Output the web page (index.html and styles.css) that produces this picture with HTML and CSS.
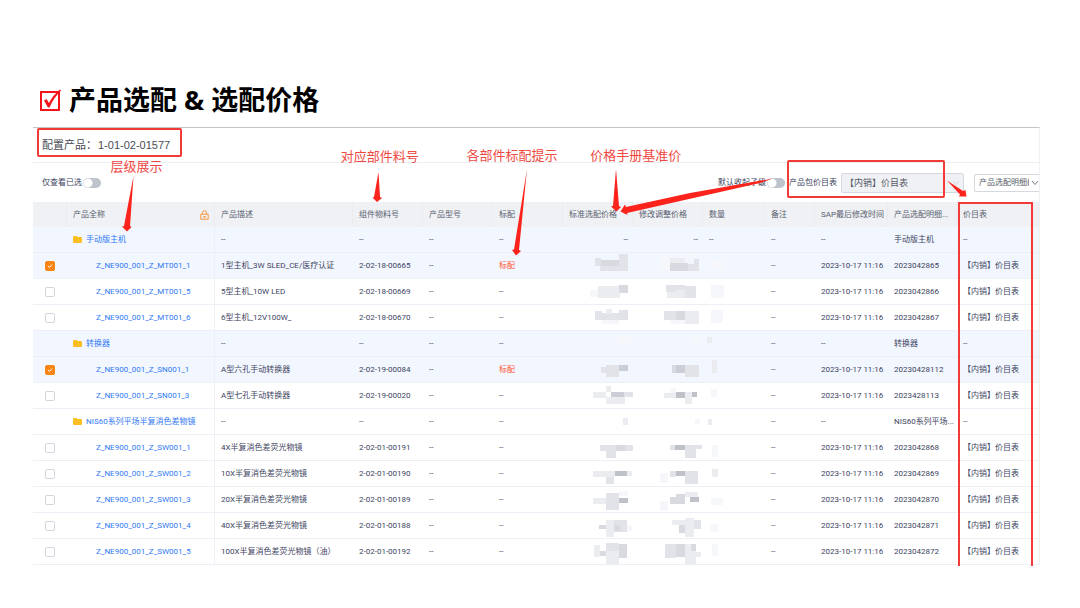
FILE: index.html
```html
<!DOCTYPE html>
<html lang="zh-CN">
<head>
    <meta charset="UTF-8">
    <meta name="viewport" content="width=device-width, initial-scale=1.0">
    <title>产品选配 &amp; 选配价格</title>
    <link rel="stylesheet" href="styles.css">
</head>
<body>
    <header class="page-title">
        <svg class="title-icon" viewBox="0 0 23 23" aria-hidden="true">
            <rect x="2" y="3" width="18" height="18" fill="none" stroke="#f5141b" stroke-width="2"/>
            <path d="M5 11.500 L7.500 10 L10 14 Q14 6 21 0.500 L22 1.500 Q14.500 9 10.500 18.500 L9 18.500 Z" fill="#f5141b"/>
        </svg>
        <h1>产品选配 &amp; 选配价格</h1>
    </header>

    <main class="panel">
        <div class="product-bar">配置产品：<span>1-01-02-01577</span></div>

        <div class="toolbar">
            <label class="switch">仅查看已选<input type="checkbox"></label>
            <div class="toolbar-right">
                <label class="switch">默认收起子级<input type="checkbox"></label>
                <label for="price-list">产品包价目表</label>
                <div class="select-wrap">
                    <select id="price-list" class="select-price">
                        <option>【内销】价目表</option>
                    </select>
                    <svg class="caret" viewBox="0 0 8 6"><path d="M1 1 L4 4.500 L7 1" fill="none" stroke="#d3d6db"/></svg>
                </div>
                <div class="select-wrap detail-wrap">
                    <select class="select-detail" aria-label="产品选配明细编号">
                        <option>产品选配明细编号</option>
                    </select>
                    <svg class="caret" viewBox="0 0 8 6"><path d="M1 1 L4 4.500 L7 1" fill="none" stroke="#777d88"/></svg>
                </div>
            </div>
        </div>

        <table class="grid">
            <colgroup>
                <col class="c-check"><col class="c-name"><col class="c-desc">
                <col class="c-mid"><col class="c-mid"><col class="c-mid"><col class="c-mid"><col class="c-mid">
                <col class="c-qty"><col class="c-note"><col class="c-time"><col class="c-detail"><col class="c-list">
            </colgroup>
            <thead>
                <tr>
                    <th></th>
                    <th>
                        <div class="name-head">产品全称
                            <svg class="lock" viewBox="0 0 9 10" aria-hidden="true">
                                <path d="M2.500 4 V2.800 a2 2 0 0 1 4 0 V4 M0.800 4.200 h7.400 v5 h-7.400 z M4.500 6 v1.600 M3 6.800 h3" fill="none" stroke="#f7963c"/>
                            </svg>
                        </div>
                    </th>
                    <th>产品描述</th>
                    <th>组件物料号</th>
                    <th>产品型号</th>
                    <th>标配</th>
                    <th>标准选配价格</th>
                    <th>修改调整价格</th>
                    <th>数量</th>
                    <th>备注</th>
                    <th>SAP最后修改时间</th>
                    <th>产品选配明细...</th>
                    <th>价目表</th>
                </tr>
            </thead>
            <tbody id="rows"></tbody>
        </table>

        <!-- 标注层 -->
        <svg class="marks" viewBox="33 127 1006 439" preserveAspectRatio="none" aria-hidden="true">
            <g id="mosaic"></g>
            <g class="mark-box">
                <rect x="38" y="129" width="143" height="27" rx="1"/>
                <rect x="788" y="161" width="156" height="36" rx="1"/>
                <path d="M959 566 V203 H1032 V566"/>
            </g>
            <g class="mark-arrow">
                <path d="M133.500 176 L130 226 L131.500 227 L127 231.500 L122 226.500 L124 226 Z"/>
                <path d="M378.500 172 L380 197 L382 198 L377 202 L372.500 197.500 L374 197 Z"/>
                <path d="M527 169 L519 250 L521 251 L516 255.500 L512 250 L514 249.500 Z"/>
                <path d="M616 169 L619 206 L621 207 L616.500 211.500 L611 206.500 L613 206 Z"/>
                <path d="M773 178.500 L760 183 L627 213 L627.500 215 L620.500 211.500 L625 204.500 L626 207 L690 193 Z"/>
                <path d="M947 180.500 L963 191 L965.500 190 L966.500 196.500 L959 196.500 L960 194.500 Z"/>
            </g>
        </svg>
        <span class="note note-level">层级展示</span>
        <span class="note note-part">对应部件料号</span>
        <span class="note note-std">各部件标配提示</span>
        <span class="note note-price">价格手册基准价</span>
    </main>

    <script src="script.js"></script>
</body>
</html>
```
FILE: styles.css
```css
* {
    box-sizing: border-box;
}
body {
    margin: 0;
    padding: 82px 40px 40px 33px;
    background: #fff;
    color: #3d4460;
    font-family: Roboto, "Noto Sans CJK SC", sans-serif;
    font-size: 8px;
    line-height: 12px;
}
.page-title {
    display: flex;
    align-items: center;
    gap: 7px;
    height: 45px;
    padding: 0 0 9px 6px;
}
.title-icon {
    width: 23px;
    height: 23px;
}
.page-title h1 {
    margin: 0;
    color: #000;
    font-family: "Noto Sans", "Noto Sans CJK SC", sans-serif;
    font-size: 27px;
    font-weight: bold;
    line-height: 38px;
}
.panel {
    position: relative;
    border-top: 1px solid #c4c4c4;
    border-right: 1px solid #f0f1f4;
}
.product-bar {
    display: flex;
    align-items: center;
    gap: 1px;
    height: 35px;
    padding-left: 9px;
    border-bottom: 1px solid #eceef2;
    color: #4a4d55;
    font-family: "Liberation Sans", "Noto Sans CJK SC", sans-serif;
    font-size: 11px;
}

/* 工具栏 */
.toolbar {
    display: flex;
    align-items: center;
    justify-content: space-between;
    height: 39px;
    padding-left: 9px;
    white-space: nowrap;
}
.toolbar-right {
    display: flex;
    align-items: center;
    gap: 4px;
}
.switch {
    display: flex;
    align-items: center;
    gap: 1px;
}
.switch input {
    appearance: none;
    width: 18px;
    height: 10px;
    margin: 0;
    border-radius: 5px;
    background: radial-gradient(circle at 5px 5px, #fff 4px, #bfc3cb 5px);
}
.select-wrap {
    position: relative;
    display: flex;
}
.select-wrap select {
    appearance: none;
    margin: 0;
    border: 1px solid #d5d8de;
    border-radius: 2px;
    color: #555b68;
    font-family: inherit;
}
.select-wrap .select-price {
    width: 123px;
    height: 20px;
    padding: 0 3px;
    background: #f0f1f4;
    font-size: 9px;
}
.detail-wrap {
    margin-left: 6px;
}
.select-wrap .select-detail {
    width: 65px;
    height: 18px;
    padding: 0 10px 0 4px;
    border-right: 0;
    border-radius: 2px 0 0 2px;
    background: #fff;
    font-size: 8px;
}
.caret {
    position: absolute;
    top: 50%;
    right: 4px;
    width: 8px;
    height: 6px;
    margin-top: -3px;
    pointer-events: none;
}
.detail-wrap .caret {
    right: 0;
}

/* 表格 */
.grid {
    width: 100%;
    border-collapse: separate;
    border-spacing: 0;
    table-layout: fixed;
}
.c-check { width: 34px; }
.c-name { width: 148px; }
.c-desc { width: 138px; }
.c-mid { width: 70px; }
.c-qty { width: 62px; }
.c-note { width: 50px; }
.c-time { width: 73px; }
.c-detail { width: 69px; }
.c-list { width: 82px; }
.grid th,
.grid td {
    height: 26px;
    padding: 0 0 0 6px;
    border-bottom: 1px solid #eceff5;
    text-align: left;
    white-space: nowrap;
}
.grid th {
    height: 25px;
    border-right: 1px solid #eaecf0;
    border-bottom: 0;
    background: #eff1f4;
    color: #596070;
    font-weight: normal;
}
.grid td:nth-child(2) {
    border-right: 1px solid #eceff5;
}
.grid .tinted td {
    background: #f2f6fe;
}
.grid .price {
    padding-right: 5px;
    text-align: right;
}
.grid .check {
    padding: 0;
    text-align: center;
}
.check input {
    appearance: none;
    display: block;
    width: 10px;
    height: 10px;
    margin: 0 auto;
    border: 1px solid #d3d6dd;
    border-radius: 2px;
    background: #fff;
}
.check input:checked {
    border-color: #fa8414;
    background: #fa8414;
}
.check label {
    position: relative;
    display: block;
}
.check svg {
    position: absolute;
    top: 50%;
    left: 50%;
    width: 6px;
    height: 6px;
    margin: -3px 0 0 -3px;
}
.name-head {
    display: flex;
    align-items: center;
    justify-content: space-between;
    padding-right: 5px;
}
.lock {
    width: 9px;
    height: 10px;
}
.grid a {
    color: #2f78f5;
    text-decoration: none;
}
.item-name {
    padding-left: 23px;
}
.group-name {
    display: flex;
    align-items: center;
    gap: 4px;
}
.folder {
    width: 9px;
    height: 7px;
}
.tag {
    color: #ff5530;
}

/* 红色标注 */
.marks {
    position: absolute;
    top: -1px;
    left: 0;
    width: 100%;
    height: 439px;
    pointer-events: none;
}
.mark-box {
    fill: none;
    stroke: #f23a36;
    stroke-width: 2;
}
.mark-arrow {
    fill: #fb231c;
}
.note {
    position: absolute;
    color: #f04842;
    font-size: 13px;
    line-height: 18px;
    white-space: nowrap;
}
.note-level { top: 30px; left: 7.7%; }
.note-part { top: 20px; left: 30.6%; }
.note-std { top: 19px; left: 43.1%; }
.note-price { top: 19px; left: 55.4%; }
```
FILE: script.js
```js
// 分组: { group, tinted }，明细: [名称, 描述, 料号, 明细编号, 已选]
const rows = [
    { group: '手动版主机', tinted: true, dashes: true },
    ['Z_NE900_001_Z_MT001_1', '1型主机_3W SLED_CE/医疗认证', '2-02-18-00665', '2023042865', true],
    ['Z_NE900_001_Z_MT001_5', '5型主机_10W LED', '2-02-18-00669', '2023042866'],
    ['Z_NE900_001_Z_MT001_6', '6型主机_12V100W_', '2-02-18-00670', '2023042867'],
    { group: '转换器', tinted: true },
    ['Z_NE900_001_Z_SN001_1', 'A型六孔手动转换器', '2-02-19-00084', '20230428112', true],
    ['Z_NE900_001_Z_SN001_3', 'A型七孔手动转换器', '2-02-19-00020', '2023428113'],
    { group: 'NIS60系列平场半复消色差物镜', short: 'NIS60系列平场...' },
    ['Z_NE900_001_Z_SW001_1', '4X半复消色差荧光物镜', '2-02-01-00191', '2023042868'],
    ['Z_NE900_001_Z_SW001_2', '10X半复消色差荧光物镜', '2-02-01-00190', '2023042869'],
    ['Z_NE900_001_Z_SW001_3', '20X半复消色差荧光物镜', '2-02-01-00189', '2023042870'],
    ['Z_NE900_001_Z_SW001_4', '40X半复消色差荧光物镜', '2-02-01-00188', '2023042871'],
    ['Z_NE900_001_Z_SW001_5', '100X半复消色差荧光物镜（油）', '2-02-01-00192', '2023042872']
];

const folder = '<svg class="folder" viewBox="0 0 9 7"><path d="M0 1 Q0 0 1 0 H3.500 L4.500 1 H8 Q9 1 9 2 V6 Q9 7 8 7 H1 Q0 7 0 6 Z" fill="#fbbf24"/></svg>';
const tick = '<svg viewBox="0 0 6 6"><path d="M1 3 L2.500 4.500 L5 1.500" fill="none" stroke="#fff"/></svg>';

function groupRow(r) {
    const d = r.dashes ? '--' : '';
    return `<tr class="${r.tinted ? 'tinted' : ''}">
        <td></td>
        <td><a href="#" class="group-name">${folder}${r.group}</a></td>
        <td>--</td><td>--</td><td>--</td><td>--</td>
        <td class="price">${d}</td><td class="price">${d}</td><td>${d}</td>
        <td>--</td><td>--</td><td>${r.short || r.group}</td><td>--</td>
    </tr>`;
}

function itemRow([name, desc, part, detail, checked]) {
    return `<tr class="${checked ? 'tinted' : ''}">
        <td class="check"><label><input type="checkbox" aria-label="${name}" ${checked ? 'checked' : ''}>${checked ? tick : ''}</label></td>
        <td><a href="#" class="item-name">${name}</a></td>
        <td>${desc}</td><td>${part}</td><td>--</td>
        <td>${checked ? '<span class="tag">标配</span>' : '--'}</td>
        <td></td><td></td><td></td>
        <td>--</td><td>2023-10-17 11:16</td><td>${detail}</td><td>【内销】价目表</td>
    </tr>`;
}

document.getElementById('rows').innerHTML = rows.map(r => r.group ? groupRow(r) : itemRow(r)).join('');

// 价格打码色块: [x, y, 宽, 高, 灰度]
const blocks = [
    [595, 258, 6, 8, 2], [601, 260, 18, 6, 3], [619, 254, 9, 12, 2], [600, 266, 28, 5, 2],
    [660, 257, 10, 13, 0], [670, 258, 15, 5, 1], [670, 263, 18, 8, 3], [688, 264, 11, 7, 2], [694, 259, 5, 5, 2], [686, 253, 8, 5, 0], [711, 260, 13, 9, 0],
    [590, 290, 8, 7, 0], [598, 286, 21, 12, 1], [619, 285, 9, 8, 3], [612, 293, 8, 5, 1],
    [666, 285, 19, 7, 2], [667, 292, 8, 6, 1], [675, 290, 13, 8, 1], [685, 286, 11, 12, 2], [711, 285, 13, 13, 0],
    [595, 311, 7, 9, 2], [602, 313, 18, 7, 2], [606, 309, 6, 5, 1], [619, 310, 9, 10, 2], [602, 320, 17, 4, 0],
    [664, 311, 12, 9, 2], [676, 311, 9, 9, 3], [685, 311, 14, 13, 1], [671, 320, 14, 4, 0], [711, 310, 12, 13, 0],
    [618, 337, 14, 7, 0], [692, 338, 9, 5, 0], [707, 337, 5, 6, 1],
    [601, 367, 5, 6, 2], [606, 365, 13, 12, 2], [619, 365, 9, 6, 4],
    [672, 365, 4, 8, 3], [676, 365, 9, 8, 4], [685, 365, 14, 12, 2], [712, 360, 5, 13, 1],
    [593, 392, 13, 6, 1], [606, 386, 5, 6, 1], [611, 392, 13, 5, 4], [624, 392, 9, 5, 2], [606, 397, 19, 7, 1],
    [664, 393, 12, 5, 1], [670, 388, 6, 5, 0], [676, 392, 9, 6, 5], [685, 392, 7, 12, 1], [692, 392, 5, 5, 5], [711, 389, 6, 8, 0],
    [623, 418, 5, 7, 1], [695, 419, 5, 5, 0], [708, 419, 4, 6, 1],
    [600, 445, 16, 6, 2], [616, 445, 9, 6, 3], [625, 445, 8, 6, 2], [606, 451, 10, 7, 2],
    [670, 445, 5, 5, 2], [675, 445, 10, 5, 5], [685, 445, 11, 13, 2], [696, 445, 6, 4, 2], [712, 445, 6, 12, 0],
    [593, 471, 22, 6, 1], [615, 471, 12, 5, 5], [627, 471, 5, 5, 1], [606, 477, 8, 7, 2],
    [660, 473, 8, 10, 0], [670, 471, 6, 6, 2], [676, 471, 9, 5, 5], [685, 471, 13, 13, 2], [712, 469, 6, 8, 1],
    [593, 498, 13, 6, 1], [606, 493, 13, 17, 2], [619, 498, 9, 5, 5], [619, 491, 9, 5, 0],
    [660, 501, 8, 10, 0], [670, 497, 6, 7, 3], [676, 494, 9, 10, 3], [685, 492, 13, 5, 1], [690, 497, 9, 5, 5], [711, 498, 12, 7, 0],
    [599, 525, 7, 4, 3], [606, 520, 8, 17, 1], [614, 520, 13, 12, 2], [614, 525, 6, 6, 3], [627, 525, 5, 6, 0],
    [672, 520, 13, 5, 1], [679, 525, 6, 8, 3], [685, 518, 9, 19, 1], [694, 520, 7, 9, 2], [711, 524, 7, 8, 0],
    [594, 545, 6, 12, 1], [600, 551, 6, 5, 3], [606, 543, 13, 8, 2], [606, 551, 13, 13, 1], [619, 544, 8, 14, 3],
    [665, 544, 11, 14, 2], [676, 544, 9, 13, 3], [685, 544, 11, 20, 1], [691, 544, 5, 7, 3], [696, 552, 5, 5, 1], [712, 544, 6, 12, 0]
];
const shades = ['#f6f7fa', '#ebecf0', '#e1e3e8', '#d8dae0', '#cbced6', '#bfc1c9'];

document.getElementById('mosaic').innerHTML = blocks
    .map(([x, y, w, h, s]) => `<rect x="${x}" y="${y}" width="${w}" height="${h}" fill="${shades[s]}"/>`)
    .join('');
```
